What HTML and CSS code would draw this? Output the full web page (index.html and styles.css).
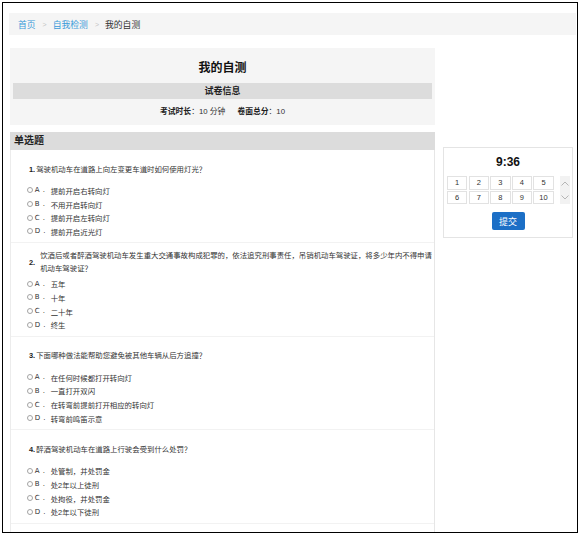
FILE: index.html
```html
<!DOCTYPE html>
<html lang="zh-CN">
<head>
<meta charset="utf-8">
<title>我的自测</title>
<link rel="stylesheet" href="styles.css">
</head>
<body>
<div class="frame">
  <div class="crumbs">
    <a class="crumb-link" href="#">首页</a><span class="crumb-sep">&gt;</span><a class="crumb-link" href="#">自我检测</a><span class="crumb-sep">&gt;</span><span class="crumb-current">我的自测</span>
  </div>

  <div class="main">
    <div class="paper">
      <div class="paper-head">
        <h1 class="paper-title">我的自测</h1>
        <div class="paper-sub">试卷信息</div>
        <div class="paper-info"><b>考试时长</b>：10 分钟<span class="info-gap"></span><b>卷面总分</b>：10</div>
      </div>

      <div class="section-head">单选题</div>
      <div class="questions">
        <div class="q">
          <div class="q-title"><span class="q-num">1.</span><span class="q-text">驾驶机动车在道路上向左变更车道时如何使用灯光？</span></div>
          <div class="opt"><span class="radio"></span><span class="opt-key">A .</span>提前开启右转向灯</div>
          <div class="opt"><span class="radio"></span><span class="opt-key">B .</span>不用开启转向灯</div>
          <div class="opt"><span class="radio"></span><span class="opt-key">C .</span>提前开启左转向灯</div>
          <div class="opt"><span class="radio"></span><span class="opt-key">D .</span>提前开启近光灯</div>
        </div>
        <div class="q">
          <div class="q-title q-title--wrap"><span class="q-num">2.</span><span class="q-text q-text--wrap">饮酒后或者醉酒驾驶机动车发生重大交通事故构成犯罪的，依法追究刑事责任，吊销机动车驾驶证，将多少年内不得申请机动车驾驶证？</span></div>
          <div class="opt"><span class="radio"></span><span class="opt-key">A .</span>五年</div>
          <div class="opt"><span class="radio"></span><span class="opt-key">B .</span>十年</div>
          <div class="opt"><span class="radio"></span><span class="opt-key">C .</span>二十年</div>
          <div class="opt"><span class="radio"></span><span class="opt-key">D .</span>终生</div>
        </div>
        <div class="q">
          <div class="q-title"><span class="q-num">3.</span><span class="q-text">下面哪种做法能帮助您避免被其他车辆从后方追撞？</span></div>
          <div class="opt"><span class="radio"></span><span class="opt-key">A .</span>在任何时候都打开转向灯</div>
          <div class="opt"><span class="radio"></span><span class="opt-key">B .</span>一直打开双闪</div>
          <div class="opt"><span class="radio"></span><span class="opt-key">C .</span>在转弯前提前打开相应的转向灯</div>
          <div class="opt"><span class="radio"></span><span class="opt-key">D .</span>转弯前鸣笛示意</div>
        </div>
        <div class="q">
          <div class="q-title"><span class="q-num">4.</span><span class="q-text">醉酒驾驶机动车在道路上行驶会受到什么处罚？</span></div>
          <div class="opt"><span class="radio"></span><span class="opt-key">A .</span>处管制，并处罚金</div>
          <div class="opt"><span class="radio"></span><span class="opt-key">B .</span>处2年以上徒刑</div>
          <div class="opt"><span class="radio"></span><span class="opt-key">C .</span>处拘役，并处罚金</div>
          <div class="opt"><span class="radio"></span><span class="opt-key">D .</span>处2年以下徒刑</div>
        </div>
      </div>
    </div>

    <div class="side">
      <div class="timer-card">
        <div class="timer">9:36</div>
        <div class="nav-wrap">
          <div class="nav-grid">
            <span class="nav-cell">1</span><span class="nav-cell">2</span><span class="nav-cell">3</span><span class="nav-cell">4</span><span class="nav-cell">5</span>
            <span class="nav-cell">6</span><span class="nav-cell">7</span><span class="nav-cell">8</span><span class="nav-cell">9</span><span class="nav-cell">10</span>
          </div>
          <div class="scroller">
            <svg class="chev" width="8" height="5" viewBox="0 0 8 5"><polyline points="0.5,4.5 4,1 7.5,4.5" fill="none" stroke="#b5b5b5" stroke-width="1"/></svg>
            <svg class="chev" width="8" height="5" viewBox="0 0 8 5"><polyline points="0.5,0.5 4,4 7.5,0.5" fill="none" stroke="#b5b5b5" stroke-width="1"/></svg>
          </div>
        </div>
        <button class="submit" type="button">提交</button>
      </div>
    </div>
  </div>
</div>
</body>
</html>
```

FILE: styles.css
```css
html, body {
  margin: 0;
  padding: 0;
  background: #fff;
}

body {
  font-family: "Liberation Sans", "Noto Sans CJK SC", sans-serif;
  color: #333;
}

.frame {
  margin: 2px 0 0 2px;
  width: 574px;
  height: 529px;
  border: 1px solid #000;
  overflow: hidden;
}

/* breadcrumb */
.crumbs {
  margin: 10px 1px 0 6px;
  height: 22px;
  background: #f5f5f5;
  padding-left: 9px;
  display: flex;
  align-items: center;
  font-size: 8.8px;
}

.crumb-link {
  color: #3a9ad9;
  text-decoration: none;
}

.crumb-sep {
  color: #c4c4c4;
  font-size: 7px;
  margin: 0 6px 0 7px;
}

.crumb-current {
  color: #333;
}

/* layout */
.main {
  display: flex;
  align-items: flex-start;
  margin-top: 13px;
  padding-left: 7px;
}

.paper {
  width: 425px;
  flex: none;
}

.side {
  width: 130px;
  flex: none;
  margin-left: 8px;
  margin-top: 99px;
}

/* paper header */
.paper-head {
  background: #f5f5f5;
  height: 77px;
  box-sizing: border-box;
  padding-top: 10px;
}

.paper-title {
  margin: 0;
  text-align: center;
  font-size: 12px;
  line-height: 20px;
  font-weight: bold;
  color: #111;
}

.paper-sub {
  margin: 5px 3px 0;
  height: 16px;
  line-height: 16px;
  background: #dcdcdc;
  text-align: center;
  font-size: 9px;
  font-weight: bold;
  color: #222;
}

.paper-info {
  margin-top: 6px;
  text-align: center;
  font-size: 7.8px;
  line-height: 14px;
  color: #333;
}

.paper-info b {
  color: #222;
}

.info-gap {
  display: inline-block;
  width: 12px;
}

/* section */
.section-head {
  margin-top: 7px;
  height: 18px;
  line-height: 18px;
  background: #dcdcdc;
  padding-left: 4px;
  font-size: 10px;
  font-weight: bold;
  color: #222;
}

.questions {
  border-left: 1px solid #ececec;
  border-right: 1px solid #e6e6e6;
  padding-bottom: 30px;
}

.q {
  padding: 6px 0 4.2px;
  border-bottom: 1px solid #f2f2f2;
  font-size: 7.4px;
}

.q-title {
  display: flex;
  align-items: center;
  min-height: 26px;
  margin-bottom: 1.5px;
  padding-left: 18px;
  line-height: 13px;
}

.q-num {
  font-weight: bold;
  color: #222;
  margin-right: 1px;
  flex: none;
}

.q-text {
  color: #333;
}

.q-title--wrap .q-num {
  margin-right: 5px;
}

.q-text--wrap {
  width: 394px;
}

.opt {
  display: flex;
  align-items: center;
  height: 13.7px;
  padding-left: 16px;
  color: #333;
}

.radio {
  width: 6px;
  height: 6px;
  border: 1px solid #a3a3a3;
  border-radius: 50%;
  box-sizing: border-box;
  margin-right: 1.7px;
  flex: none;
}

.opt-key {
  width: 16px;
  flex: none;
  font-family: "DejaVu Sans", sans-serif;
  font-size: 7px;
  word-spacing: 1px;
}

/* timer card */
.timer-card {
  border: 1px solid #e4e4e4;
  height: 91px;
  box-sizing: border-box;
  padding: 6.5px 2px 0;
  background: #fff;
}

.timer {
  text-align: center;
  font-size: 12px;
  line-height: 15px;
  font-weight: bold;
  color: #111;
}

.nav-wrap {
  display: flex;
  margin-top: 6.5px;
}

.nav-grid {
  display: grid;
  grid-template-columns: repeat(5, 20.4px);
  grid-auto-rows: 13.5px;
  gap: 1.2px;
  padding-left: 1px;
}

.nav-cell {
  border: 1px solid #e2e2e2;
  box-sizing: border-box;
  display: flex;
  align-items: center;
  justify-content: center;
  font-size: 7.5px;
  color: #333;
}

.scroller {
  margin-left: 6px;
  width: 12px;
  height: 28px;
  background: #f2f2f2;
  display: flex;
  flex-direction: column;
  align-items: center;
  justify-content: space-around;
}

.chev {
  display: block;
}

.submit {
  display: block;
  margin: 8px auto 0;
  width: 33px;
  height: 18px;
  padding: 0;
  border: none;
  border-radius: 2px;
  background: #1c6fc6;
  color: #fff;
  font-family: "Liberation Sans", "Noto Sans CJK SC", sans-serif;
  font-size: 9px;
}
```
